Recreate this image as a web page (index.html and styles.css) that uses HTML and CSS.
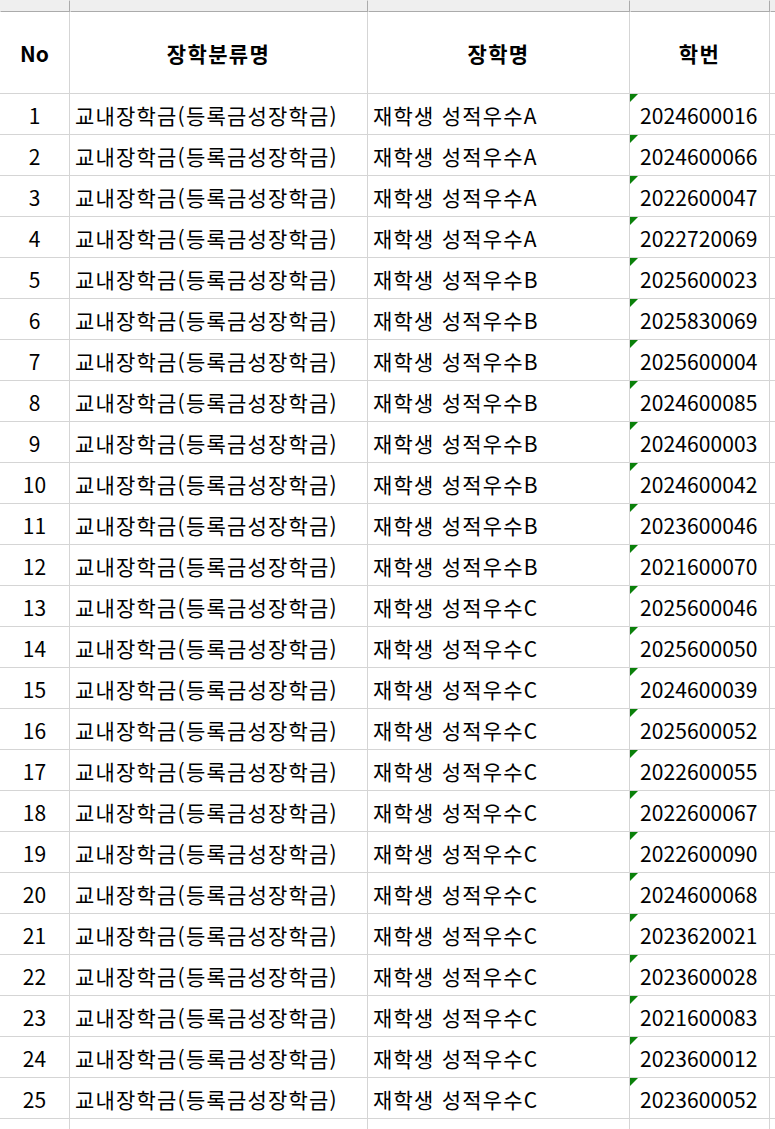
FILE: index.html
```html
<!DOCTYPE html>
<html lang="ko">
<head>
    <meta charset="UTF-8">
    <meta name="viewport" content="width=device-width, initial-scale=1.0">
    <title>장학금 명단</title>
    <link rel="stylesheet" href="styles.css">
</head>
<body>
    <div class="sheet">
        <div class="row strip">
            <div></div><div></div><div></div><div></div><div></div>
        </div>
        <div class="row head">
            <div>No</div>
            <div>장학분류명</div>
            <div>장학명</div>
            <div>학번</div>
            <div></div>
        </div>
        <div class="row"><div class="no">1</div><div>교내장학금(등록금성장학금)</div><div>재학생 성적우수A</div><div class="id">2024600016</div><div></div></div>
        <div class="row"><div class="no">2</div><div>교내장학금(등록금성장학금)</div><div>재학생 성적우수A</div><div class="id">2024600066</div><div></div></div>
        <div class="row"><div class="no">3</div><div>교내장학금(등록금성장학금)</div><div>재학생 성적우수A</div><div class="id">2022600047</div><div></div></div>
        <div class="row"><div class="no">4</div><div>교내장학금(등록금성장학금)</div><div>재학생 성적우수A</div><div class="id">2022720069</div><div></div></div>
        <div class="row"><div class="no">5</div><div>교내장학금(등록금성장학금)</div><div>재학생 성적우수B</div><div class="id">2025600023</div><div></div></div>
        <div class="row"><div class="no">6</div><div>교내장학금(등록금성장학금)</div><div>재학생 성적우수B</div><div class="id">2025830069</div><div></div></div>
        <div class="row"><div class="no">7</div><div>교내장학금(등록금성장학금)</div><div>재학생 성적우수B</div><div class="id">2025600004</div><div></div></div>
        <div class="row"><div class="no">8</div><div>교내장학금(등록금성장학금)</div><div>재학생 성적우수B</div><div class="id">2024600085</div><div></div></div>
        <div class="row"><div class="no">9</div><div>교내장학금(등록금성장학금)</div><div>재학생 성적우수B</div><div class="id">2024600003</div><div></div></div>
        <div class="row"><div class="no">10</div><div>교내장학금(등록금성장학금)</div><div>재학생 성적우수B</div><div class="id">2024600042</div><div></div></div>
        <div class="row"><div class="no">11</div><div>교내장학금(등록금성장학금)</div><div>재학생 성적우수B</div><div class="id">2023600046</div><div></div></div>
        <div class="row"><div class="no">12</div><div>교내장학금(등록금성장학금)</div><div>재학생 성적우수B</div><div class="id">2021600070</div><div></div></div>
        <div class="row"><div class="no">13</div><div>교내장학금(등록금성장학금)</div><div>재학생 성적우수C</div><div class="id">2025600046</div><div></div></div>
        <div class="row"><div class="no">14</div><div>교내장학금(등록금성장학금)</div><div>재학생 성적우수C</div><div class="id">2025600050</div><div></div></div>
        <div class="row"><div class="no">15</div><div>교내장학금(등록금성장학금)</div><div>재학생 성적우수C</div><div class="id">2024600039</div><div></div></div>
        <div class="row"><div class="no">16</div><div>교내장학금(등록금성장학금)</div><div>재학생 성적우수C</div><div class="id">2025600052</div><div></div></div>
        <div class="row"><div class="no">17</div><div>교내장학금(등록금성장학금)</div><div>재학생 성적우수C</div><div class="id">2022600055</div><div></div></div>
        <div class="row"><div class="no">18</div><div>교내장학금(등록금성장학금)</div><div>재학생 성적우수C</div><div class="id">2022600067</div><div></div></div>
        <div class="row"><div class="no">19</div><div>교내장학금(등록금성장학금)</div><div>재학생 성적우수C</div><div class="id">2022600090</div><div></div></div>
        <div class="row"><div class="no">20</div><div>교내장학금(등록금성장학금)</div><div>재학생 성적우수C</div><div class="id">2024600068</div><div></div></div>
        <div class="row"><div class="no">21</div><div>교내장학금(등록금성장학금)</div><div>재학생 성적우수C</div><div class="id">2023620021</div><div></div></div>
        <div class="row"><div class="no">22</div><div>교내장학금(등록금성장학금)</div><div>재학생 성적우수C</div><div class="id">2023600028</div><div></div></div>
        <div class="row"><div class="no">23</div><div>교내장학금(등록금성장학금)</div><div>재학생 성적우수C</div><div class="id">2021600083</div><div></div></div>
        <div class="row"><div class="no">24</div><div>교내장학금(등록금성장학금)</div><div>재학생 성적우수C</div><div class="id">2023600012</div><div></div></div>
        <div class="row"><div class="no">25</div><div>교내장학금(등록금성장학금)</div><div>재학생 성적우수C</div><div class="id">2023600052</div><div></div></div>
        <div class="row"><div></div><div></div><div></div><div></div><div></div></div>
    </div>
</body>
</html>
```
FILE: styles.css
```css
body {
    margin: 0;
    padding: 0;
    background: white;
    color: black;
    font-family: "Noto Sans CJK KR", "Noto Sans", sans-serif;
    font-size: 21px;
    overflow: hidden;
}
.sheet {
    display: grid;
    grid-template-columns: 69px 297px 261px 139px 1fr;
    grid-template-rows: 11px 81px;
    grid-auto-rows: 40px;
    gap: 1px;
    background: #d5d5d5;
}
.row {
    display: contents;
}
.row > div {
    background: white;
    display: flex;
    align-items: center;
    padding: 2px 0 0 5px;
    letter-spacing: 1.2px;
    white-space: nowrap;
    overflow: hidden;
    position: relative;
}
.strip > div {
    background: #efefef;
    box-shadow: 1px 1px 0 #ababab;
    padding: 0;
}
.head > div {
    justify-content: center;
    font-weight: bold;
    letter-spacing: 1.4px;
    padding: 0;
}
.head > div:first-child {
    letter-spacing: 0;
}
.row > .no {
    justify-content: center;
    letter-spacing: 0;
    padding-left: 0;
}
.row > .id {
    padding-left: 10px;
    letter-spacing: 0.1px;
}
.id::before {
    content: "";
    position: absolute;
    top: 0;
    left: 0;
    border-top: 8px solid #0a800a;
    border-right: 8px solid transparent;
}
```
